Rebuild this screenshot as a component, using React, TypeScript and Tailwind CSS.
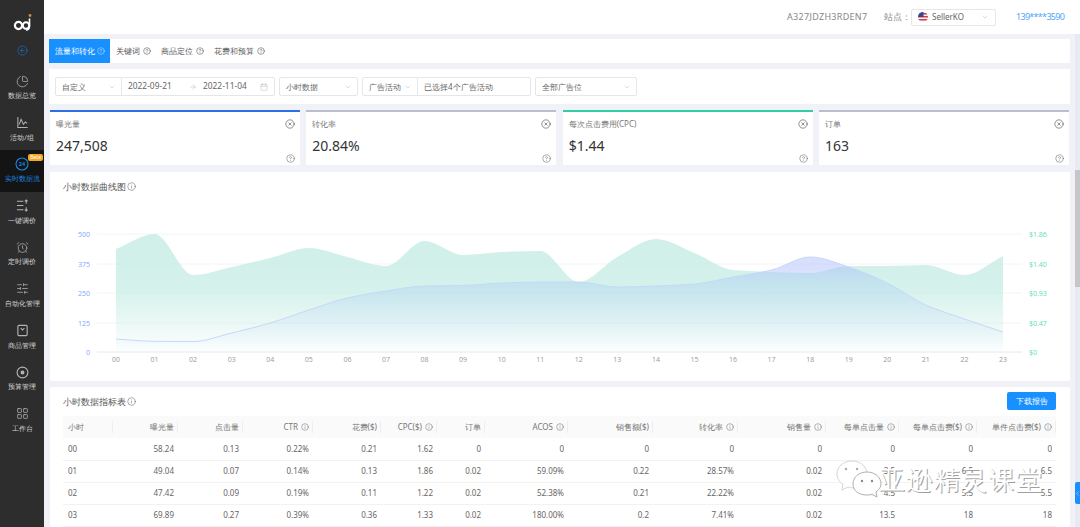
import { AlarmClock, ArrowRight, Calendar, ChartPie, ChevronDown, ChevronLeft, CircleArrowLeft, CircleHelp, CircleX, Info, LayoutGrid, SlidersHorizontal } from 'lucide-react'
import type { ReactNode } from 'react'

const xAt = (i: number) => 116 + (i * (1003 - 116)) / 23

const green = [249, 234, 275, 267, 258, 248, 257, 266, 241, 255, 252, 251, 282, 257, 239, 253, 270, 272, 273, 266, 266, 265, 275, 256]
const blue = [339, 341.3, 341.5, 333, 323, 310, 298, 291, 286, 285.5, 283, 282, 282, 287, 286, 284, 277, 270, 257, 267, 283, 305, 319, 332]

// monotone curve, so peaks stay flat like the chart lib draws them
function curve(ys: number[]) {
  const h = xAt(1) - xAt(0)
  const m = ys.map((y, i) => {
    if (i === 0) return (ys[1] - y) / h
    if (i === ys.length - 1) return (y - ys[i - 1]) / h
    const a = (y - ys[i - 1]) / h
    const b = (ys[i + 1] - y) / h
    return a * b <= 0 ? 0 : (2 * a * b) / (a + b)
  })
  let d = `M${xAt(0)} ${ys[0]}`
  for (let i = 1; i < ys.length; i++) {
    d += ` C${xAt(i - 1) + h / 3} ${ys[i - 1] + (m[i - 1] * h) / 3} ${xAt(i) - h / 3} ${ys[i] - (m[i] * h) / 3} ${xAt(i)} ${ys[i]}`
  }
  return d
}

function Chart() {
  const area = (ys: number[]) => `${curve(ys)} L1003 352 L116 352 Z`
  return (
    <svg viewBox="50 172 1020 209" className="absolute left-0 top-0 h-[209px] w-[1020px]">
      <defs>
        <linearGradient id="greenFill" gradientUnits="userSpaceOnUse" x1="0" y1="234" x2="0" y2="352">
          <stop offset="0" stopColor="#c2ebe2" stopOpacity="0.78" />
          <stop offset="0.45" stopColor="#c2ebe2" stopOpacity="0.7" />
          <stop offset="1" stopColor="#c2ebe2" stopOpacity="0.03" />
        </linearGradient>
        <linearGradient id="blueFill" gradientUnits="userSpaceOnUse" x1="0" y1="234" x2="0" y2="352">
          <stop offset="0" stopColor="#a9bbfa" stopOpacity="0.48" />
          <stop offset="0.3" stopColor="#a9bbfa" stopOpacity="0.46" />
          <stop offset="0.42" stopColor="#a9cdf3" stopOpacity="0.38" />
          <stop offset="1" stopColor="#a9cdf3" stopOpacity="0" />
        </linearGradient>
      </defs>
      {[234, 264, 293, 323].map((y) => (
        <line key={y} x1="97" x2="1022" y1={y} y2={y} stroke="#f3f4f6" />
      ))}
      <line x1="97" x2="1022" y1="352" y2="352" stroke="#e6e8ee" />
      <path d={area(green)} fill="url(#greenFill)" />
      <path d={area(blue)} fill="url(#blueFill)" />
      <path d={curve(blue)} fill="none" stroke="#c4d9fb" strokeWidth="1" />
      {['500', '375', '250', '125', '0'].map((t, i) => (
        <text key={t} x="90" y={[236.5, 266.5, 295.5, 325.5, 354.5][i]} textAnchor="end" fontSize="7" fill="#7ea8ff" fontFamily="Open Sans">
          {t}
        </text>
      ))}
      {['$1.86', '$1.40', '$0.93', '$0.47', '$0'].map((t, i) => (
        <text key={t} x="1029" y={[236.5, 266.5, 295.5, 325.5, 354.5][i]} fontSize="7" fill="#5cdcb8" fontFamily="Open Sans">
          {t}
        </text>
      ))}
      {green.map((_, i) => (
        <text key={i} x={xAt(i)} y="362" textAnchor="middle" fontSize="7" fill="#999" fontFamily="Open Sans">
          {String(i).padStart(2, '0')}
        </text>
      ))}
    </svg>
  )
}

function Logo() {
  return (
    <svg viewBox="0 0 20 20" className="h-[20px] w-[20px]">
      <circle cx="5.5" cy="12.5" r="3.6" fill="none" stroke="#fff" strokeWidth="2.2" />
      <circle cx="13" cy="12.5" r="3.2" fill="none" stroke="#fff" strokeWidth="2" />
      <path d="M16.5 5.5 V13 Q16.5 17 13 17" fill="none" stroke="#fff" strokeWidth="1.6" />
      <circle cx="17" cy="2.5" r="1.4" fill="#e08a3c" />
    </svg>
  )
}

function NavItem({ icon, label, active }: { icon: ReactNode; label: string; active?: boolean }) {
  return (
    <div className={`relative flex h-[41.6px] flex-col items-center pt-[6px] ${active ? 'bg-[#141414] text-[#1a84e0]' : 'text-[#d4d4d4]'}`}>
      <div className={`flex h-[16px] items-center justify-center ${active ? 'text-[#1a84e0]' : 'text-[#b4b4b4]'}`}>{icon}</div>
      <div className="mt-[1px] whitespace-nowrap text-[7px] leading-[11px]">{label}</div>
    </div>
  )
}

function Sidebar() {
  return (
    <aside className="flex h-[527px] w-[44px] shrink-0 flex-col bg-[#2d2d2d]">
      <div className="flex h-[33px] items-end justify-center pl-[1px]">
        <Logo />
      </div>
      <div className="flex h-[34px] items-start justify-center pt-[12px] text-[#1473c6]">
        <CircleArrowLeft size={11} strokeWidth={1.5} />
      </div>
      <NavItem label="数据总览" icon={<ChartPie size={13} strokeWidth={1.4} />} />
      <NavItem
        label="活动/组"
        icon={
          <svg viewBox="0 0 14 14" className="h-[13px] w-[13px]" fill="none" stroke="currentColor" strokeWidth="1.1">
            <path d="M2 1 V12.5 H12.5 M3.5 9 L5.5 3.5 L8 9 L10 6.5 L12 8" />
          </svg>
        }
      />
      <NavItem
        active
        label="实时数据流"
        icon={
          <svg viewBox="0 0 14 14" className="h-[14px] w-[14px]">
            <circle cx="7" cy="7" r="6" fill="none" stroke="#1a84e0" strokeWidth="1.1" />
            <text x="7" y="9" textAnchor="middle" fontSize="5.5" fontWeight="700" fill="#1a84e0" fontFamily="Open Sans">24</text>
          </svg>
        }
      />
      <NavItem
        label="一键调价"
        icon={
          <svg viewBox="0 0 14 14" className="h-[13px] w-[13px]" fill="none" stroke="currentColor" strokeWidth="1.1">
            <path d="M1 2.5 H8 M1 7 H8 M1 11.5 H8 M11 5 V1 M9.5 2.5 L11 1 L12.5 2.5 M11 9 V13 M9.5 11.5 L11 13 L12.5 11.5" />
          </svg>
        }
      />
      <NavItem label="定时调价" icon={<AlarmClock size={13} strokeWidth={1.4} />} />
      <NavItem label="自动化管理" icon={<SlidersHorizontal size={13} strokeWidth={1.4} />} />
      <NavItem
        label="商品管理"
        icon={
          <svg viewBox="0 0 14 14" className="h-[13px] w-[13px]" fill="none" stroke="currentColor" strokeWidth="1.2">
            <rect x="2" y="1.5" width="10" height="11" rx="1.2" />
            <path d="M5 4.5 L7 6.5 L9 4.5" />
          </svg>
        }
      />
      <NavItem
        label="预算管理"
        icon={
          <svg viewBox="0 0 14 14" className="h-[13px] w-[13px]" fill="none" stroke="currentColor" strokeWidth="1.2">
            <circle cx="7" cy="7" r="5.8" />
            <circle cx="7" cy="7" r="1.5" fill="currentColor" />
          </svg>
        }
      />
      <NavItem label="工作台" icon={<LayoutGrid size={13} strokeWidth={1.4} />} />
      <div className="absolute left-[28px] top-[154px] h-[7px] w-[15px] rounded-[2px] bg-[#f5a623] text-center text-[5px] leading-[7px] text-white">Beta</div>
    </aside>
  )
}

function Select({ label, className }: { label: string; className: string }) {
  return (
    <div className={`flex h-[19px] items-center justify-between rounded-[2px] border border-[#e4e6ea] pl-[6px] pr-[5px] text-[8px] text-[#666] ${className}`}>
      <span className="whitespace-nowrap">{label}</span>
      <ChevronDown size={8} strokeWidth={1.2} className="text-[#aaa]" />
    </div>
  )
}

function Filters() {
  return (
    <div className="mt-[6px] flex h-[35px] items-center bg-white pl-[6px]">
      <Select label="自定义" className="w-[67px] rounded-r-none" />
      <div className="flex h-[19px] w-[153px] items-center rounded-r-[2px] border border-l-0 border-[#e4e6ea] pl-[6px] text-[8.4px] text-[#666]">
        <span className="w-[61px]">2022-09-21</span>
        <ArrowRight size={8} strokeWidth={1.2} className="text-[#aaa]" />
        <span className="ml-[6px] w-[57px]">2022-11-04</span>
        <Calendar size={8} strokeWidth={1.2} className="text-[#aaa]" />
      </div>
      <Select label="小时数据" className="ml-[4px] w-[79px]" />
      <Select label="广告活动" className="ml-[4px] w-[56px] rounded-r-none" />
      <div className="flex h-[19px] w-[113px] items-center rounded-r-[2px] border border-l-0 border-[#e4e6ea] pl-[6px] text-[8px] text-[#666]">已选择4个广告活动</div>
      <Select label="全部广告位" className="ml-[4px] w-[102px]" />
    </div>
  )
}

function Tabs() {
  const tabs = ['关键词', '商品定位', '花费和预算']
  return (
    <div className="mt-[5px] flex h-[24px] items-center bg-white text-[8px] text-[#555]">
      <div className="flex h-[24px] w-[61px] items-center justify-center gap-[2px] bg-[#1890ff] text-white">
        流量和转化 <CircleHelp size={8} strokeWidth={1.2} />
      </div>
      <div className="ml-[6px] flex gap-[10px]">
        {tabs.map((t) => (
          <div key={t} className="flex items-center gap-[3px] whitespace-nowrap">
            {t} <CircleHelp size={8} strokeWidth={1.4} className="text-[#333]" />
          </div>
        ))}
      </div>
    </div>
  )
}

function Card({ title, value, color }: { title: string; value: string; color: string }) {
  return (
    <div className={`relative h-[55px] w-[250px] border-t-2 bg-white pl-[6px] ${color}`}>
      <div className="mt-[6px] text-[8px] leading-[11px] text-[#777]">{title}</div>
      <div className="mt-[7px] text-[14px] leading-[19px] text-[#333]">{value}</div>
      <CircleX size={10} strokeWidth={1.3} className="absolute right-[5px] top-[7px] text-[#333]" />
      <CircleHelp size={9} strokeWidth={1.3} className="absolute bottom-[2px] right-[5px] text-[#555]" />
    </div>
  )
}

const columns: { label: string; w: string; tip?: boolean }[] = [
  { label: '小时', w: 'w-[50px]' },
  { label: '曝光量', w: 'w-[65px]' },
  { label: '点击量', w: 'w-[65px]' },
  { label: 'CTR', w: 'w-[70px]', tip: true },
  { label: '花费($)', w: 'w-[68px]' },
  { label: 'CPC($)', w: 'w-[56px]', tip: true },
  { label: '订单', w: 'w-[48px]' },
  { label: 'ACOS', w: 'w-[83px]', tip: true },
  { label: '销售额($)', w: 'w-[85px]' },
  { label: '转化率', w: 'w-[85px]', tip: true },
  { label: '销售量', w: 'w-[88px]', tip: true },
  { label: '每单点击量', w: 'w-[73px]', tip: true },
  { label: '每单点击费($)', w: 'w-[78px]', tip: true },
  { label: '单件点击费($)', w: 'w-[79px]', tip: true },
]

const rows = [
  ['00', '58.24', '0.13', '0.22%', '0.21', '1.62', '0', '0', '0', '0', '0', '0', '0', '0'],
  ['01', '49.04', '0.07', '0.14%', '0.13', '1.86', '0.02', '59.09%', '0.22', '28.57%', '0.02', '3.5', '6.5', '6.5'],
  ['02', '47.42', '0.09', '0.19%', '0.11', '1.22', '0.02', '52.38%', '0.21', '22.22%', '0.02', '4.5', '5.5', '5.5'],
  ['03', '69.89', '0.27', '0.39%', '0.36', '1.33', '0.02', '180.00%', '0.2', '7.41%', '0.02', '13.5', '18', '18'],
]

function MetricsTable() {
  return (
    <table className="absolute left-[13px] top-[29px] w-[993px] table-fixed border-collapse text-[8px] text-[#666]">
      <colgroup>
        {columns.map((c) => (
          <col key={c.label} className={c.w} />
        ))}
      </colgroup>
      <thead>
        <tr className="h-[22px] bg-[#fafafa] text-[#777]">
          {columns.map((c, i) => (
            <th
              key={c.label}
              className={`relative whitespace-nowrap pr-[4px] font-normal after:absolute after:right-0 after:top-[5px] after:h-[12px] after:w-px after:bg-[#eeeeee] ${i === 0 ? 'pl-[5px] text-left' : 'text-right'}`}
            >
              <span className="inline-flex items-center gap-[3px]">
                {c.label}
                {c.tip && <Info size={8} strokeWidth={1.3} className="text-[#555]" />}
              </span>
            </th>
          ))}
        </tr>
      </thead>
      <tbody>
        {rows.map((r) => (
          <tr key={r[0]} className="h-[22px] border-b border-[#f2f2f2]">
            {r.map((v, i) => (
              <td key={i} className={`pr-[4px] ${i === 0 ? 'pl-[5px] text-left' : 'text-right'}`}>
                {v}
              </td>
            ))}
          </tr>
        ))}
      </tbody>
    </table>
  )
}

function Watermark() {
  return (
    <div className="pointer-events-none absolute left-[836px] top-[459px] flex items-start">
      <svg viewBox="0 0 46 40" className="h-[40px] w-[46px]">
        <path d="M16 2 C7 2 1 8 1 15 C1 19 3 23 7 25 L6 31 L12 28 C14 28.6 16 29 18 29 C26 29 31 22 31 15 C31 8 25 2 16 2 Z" fill="#ffffff" fillOpacity="0.85" stroke="#c4c4c4" strokeWidth="0.7" />
        <path d="M31 13 C23 13 17 18 17 25 C17 32 23 36 31 36 C33 36 34 36 36 35.4 L41 38 L40 33 C43 31 45 28 45 25 C45 18 39 13 31 13 Z" fill="#ffffff" fillOpacity="0.9" stroke="#9a9a9a" strokeWidth="0.8" />
        <circle cx="10" cy="10" r="1.2" fill="#aaa" />
        <circle cx="21" cy="10" r="1.2" fill="#aaa" />
        <circle cx="26" cy="22" r="1.2" fill="#888" />
        <circle cx="36" cy="22" r="1.2" fill="#888" />
      </svg>
      <div className="ml-[-3px] mt-[3px] whitespace-nowrap text-[26px] font-light leading-[34px] tracking-[1.4px] text-white [text-shadow:1px_1px_0_#a0a0a0]">亚逊精灵课堂</div>
    </div>
  )
}

export default function App() {
  return (
    <div className="relative flex h-[527px] w-[1080px] overflow-hidden bg-[#f0f2f8] font-['Open_Sans','Noto_Sans_CJK_SC',sans-serif]">
      <Sidebar />
      <main className="min-w-0 flex-1">
        <header className="flex h-[34px] items-center bg-white pl-[743px] font-['Liberation_Sans','Noto_Sans_CJK_SC',sans-serif] text-[8.5px] text-[#888]">
          <span className="w-[97px] whitespace-nowrap text-[9px] tracking-[0.3px]">A327JDZH3RDEN7</span>
          <span className="w-[27px] whitespace-nowrap">站点：</span>
          <div className="flex h-[17px] w-[85px] items-center rounded-[2px] border border-[#e4e6ea] pl-[6px] pr-[6px] text-[#666]">
            <svg viewBox="0 0 20 20" className="h-[10px] w-[10px]">
              <clipPath id="flagClip"><circle cx="10" cy="10" r="10" /></clipPath>
              <g clipPath="url(#flagClip)">
                <rect width="20" height="20" fill="#f4f4f4" />
                <rect y="2" width="20" height="3" fill="#d8394a" />
                <rect y="8" width="20" height="3" fill="#d8394a" />
                <rect y="14" width="20" height="3" fill="#d8394a" />
                <rect width="11" height="10" fill="#34478f" />
              </g>
            </svg>
            <span className="ml-[4px] flex-1 text-[8px]">SellerKO</span>
            <ChevronDown size={8} strokeWidth={1.2} className="text-[#aaa]" />
          </div>
          <span className="ml-[20px] whitespace-nowrap text-[9px] tracking-[-0.7px] text-[#4fa6f7]">139****3590</span>
        </header>
        <div className="ml-[5px] w-[1021px]">
          <Tabs />
          <Filters />
        </div>
        <div className="ml-[6px] mt-[6px] flex w-[1019px] justify-between">
          <Card title="曝光量" value="247,508" color="border-[#2e6fe8]" />
          <Card title="转化率" value="20.84%" color="border-[#b8bfcf]" />
          <Card title="每次点击费用(CPC)" value="$1.44" color="border-[#2fd0a8]" />
          <Card title="订单" value="163" color="border-[#b8bfcf]" />
        </div>
        <section className="relative ml-[6px] mt-[7px] h-[209px] w-[1020px] rounded-[2px] bg-white">
          <Chart />
          <div className="absolute left-[13px] top-[8px] flex items-center gap-[1px] text-[9px] leading-[13px] text-[#555]">
            小时数据曲线图 <Info size={9} strokeWidth={1.3} />
          </div>
        </section>
        <section className="relative ml-[6px] mt-[6px] h-[140px] w-[1020px] rounded-[2px] bg-white">
          <div className="absolute left-[13px] top-[8px] flex items-center gap-[1px] text-[9px] leading-[13px] text-[#555]">
            小时数据指标表 <Info size={9} strokeWidth={1.3} />
          </div>
          <div className="absolute left-[957px] top-[5px] flex h-[18px] w-[49px] items-center justify-center rounded-[2px] bg-[#1890ff] text-[8px] text-white">下载报告</div>
          <MetricsTable />
        </section>
      </main>
      <div className="absolute right-0 top-[34px] h-[493px] w-[5px] bg-[#e8eaf1]" />
      <div className="absolute right-0 top-[170px] h-[117px] w-[5px] bg-[#c6c6c8]" />
      <div className="absolute right-0 top-[482px] flex h-[22px] w-[5px] items-center justify-center overflow-hidden rounded-l-[2px] bg-[#1890ff] text-white">
        <ChevronLeft size={7} strokeWidth={1.5} className="shrink-0" />
      </div>
      <Watermark />
    </div>
  )
}
